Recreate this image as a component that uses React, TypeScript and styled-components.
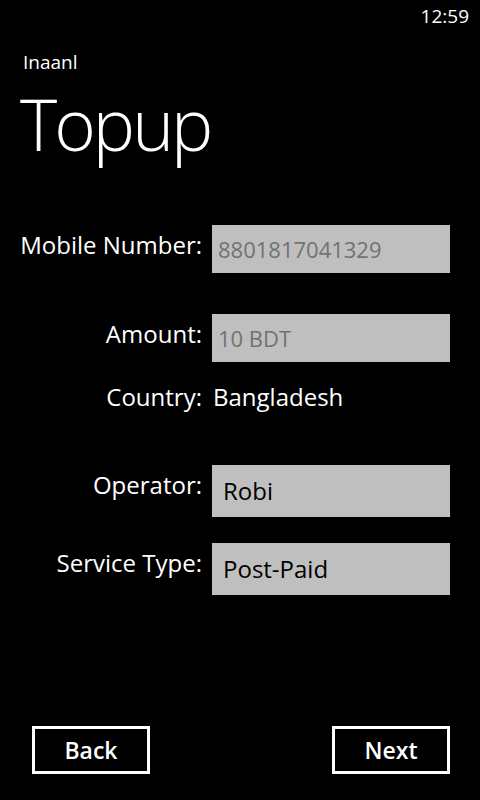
import React from 'react';
import styled, { createGlobalStyle } from 'styled-components';

const GlobalStyle = createGlobalStyle`
    html, body {
        margin: 0;
        padding: 0;
        background: #000;
    }
    body {
        font-family: 'Open Sans', 'Noto Sans', 'Liberation Sans', sans-serif;
        color: #fff;
    }
`;

const fields = [
    { label: 'Mobile Number:', value: '8801817041329', kind: 'hint', top: 0 },
    { label: 'Amount:', value: '10 BDT', kind: 'hint', top: 41 },
    { label: 'Country:', value: 'Bangladesh', kind: 'text', top: 21 },
    { label: 'Operator:', value: 'Robi', kind: 'select', top: 54 },
    { label: 'Service Type:', value: 'Post-Paid', kind: 'select', top: 26 },
];

const App = () => {
    return (
        <>
            <GlobalStyle />
            <Page>
                <StatusBar>
                    <Clock>12:59</Clock>
                </StatusBar>
                <Header>
                    <AppName>Inaanl</AppName>
                    <Title>Topup</Title>
                </Header>
                <Form>
                    {fields.map((f) => (
                        <Row key={f.label} $top={f.top}>
                            <Label $plain={f.kind === 'text'}>{f.label}</Label>
                            {f.kind === 'text' ? (
                                <PlainValue>{f.value}</PlainValue>
                            ) : (
                                <Box $hint={f.kind === 'hint'} $tall={f.kind === 'select'}>
                                    {f.value}
                                </Box>
                            )}
                        </Row>
                    ))}
                </Form>
                <Footer>
                    <OutlineButton>Back</OutlineButton>
                    <OutlineButton>Next</OutlineButton>
                </Footer>
            </Page>
        </>
    );
};

const Page = styled.div`
    width: 480px;
    height: 800px;
    display: flex;
    flex-direction: column;
    background: #000;
    overflow: hidden;
`;

const StatusBar = styled.div`
    height: 32px;
    display: flex;
    justify-content: flex-end;
    align-items: center;
    padding-right: 11px;
`;

const Clock = styled.span`
    font-size: 19px;
    line-height: 1;
`;

const Header = styled.div`
    padding-left: 23px;
    display: flex;
    flex-direction: column;
`;

const AppName = styled.div`
    margin-top: 18px;
    font-size: 19px;
    line-height: 1.3;
`;

const Title = styled.div`
    margin-top: 3px;
    margin-left: -3px;
    font-size: 71px;
    font-weight: 300;
    line-height: 1.3;
    letter-spacing: -3px;
`;

const Form = styled.div`
    display: flex;
    flex-direction: column;
    padding-left: 12px;
    margin-top: 55px;
`;

const Row = styled.div<{ $top: number }>`
    display: grid;
    grid-template-columns: 190px 238px;
    column-gap: 10px;
    align-items: start;
    margin-top: ${(p) => p.$top}px;
`;

const Label = styled.div<{ $plain?: boolean }>`
    text-align: right;
    font-size: 24px;
    line-height: 28px;
    padding-top: ${(p) => (p.$plain ? 0 : 6)}px;
    white-space: nowrap;
`;

const Box = styled.div<{ $hint?: boolean; $tall?: boolean }>`
    box-sizing: border-box;
    height: ${(p) => (p.$tall ? 52 : 48)}px;
    background: #bfbfbf;
    color: ${(p) => (p.$hint ? '#727272' : '#000')};
    font-size: ${(p) => (p.$hint ? 22 : 24)}px;
    line-height: 28px;
    padding: ${(p) => (p.$tall ? '12px 0 0 11px' : '10px 0 0 6px')};
    white-space: nowrap;
`;

const PlainValue = styled.div`
    font-size: 24px;
    line-height: 28px;
    padding-left: 1px;
`;

const Footer = styled.div`
    margin-top: auto;
    display: flex;
    justify-content: space-between;
    padding: 0 30px 26px 32px;
`;

const OutlineButton = styled.button`
    box-sizing: border-box;
    width: 118px;
    height: 48px;
    background: transparent;
    border: 3px solid #fff;
    border-radius: 0;
    color: #fff;
    font-family: inherit;
    font-size: 23px;
    font-weight: 600;
    padding: 0 0 1px;
`;

export default App;
